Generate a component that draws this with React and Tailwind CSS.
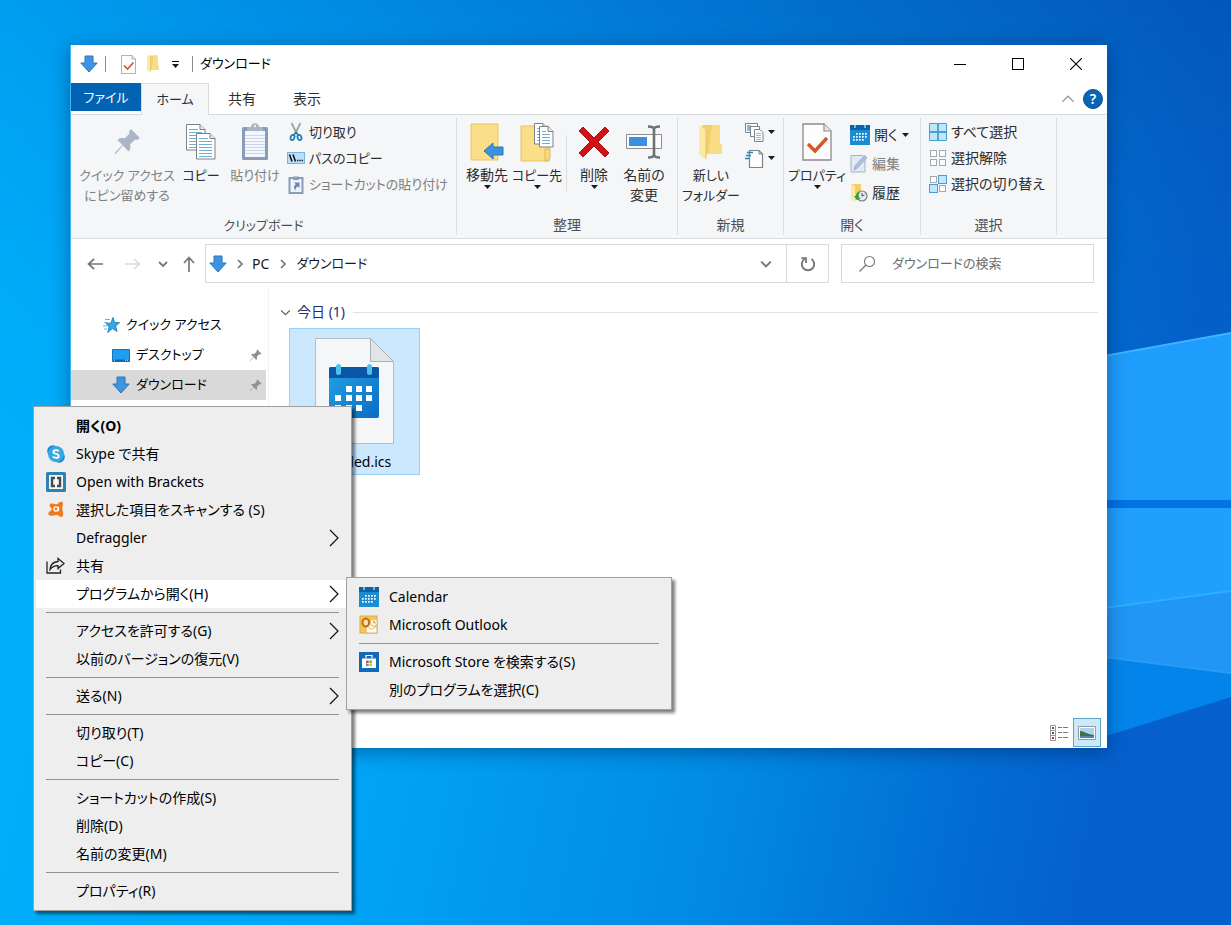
import React from "react";
import clsx from "clsx";

/* ---------- Icons ---------- */

function DownArrow({ className = "w-[18px] h-[18px]" }) {
  return (
    <svg viewBox="0 0 18 18" className={className}>
      <path d="M5 1h8v7h4.2L9 17 .8 8H5z" fill="#3f93e0" stroke="#2878bd" strokeWidth="1" />
    </svg>
  );
}

function CheckDoc({ className }) {
  return (
    <svg viewBox="0 0 30 38" className={className}>
      <path d="M1 1h21l7 7v29H1z" fill="#fdfdfd" stroke="#8a8a8a" strokeWidth="1.3" />
      <path d="M22 1v7h7" fill="#e8e8e8" stroke="#8a8a8a" strokeWidth="1.2" />
      <path d="M6 21l7 7 12-13" fill="none" stroke="#d4572a" strokeWidth="3.4" />
    </svg>
  );
}

function Folder({ className }) {
  return (
    <svg viewBox="0 0 26 36" className={className}>
      <path d="M4 1h18v19l2 1v9H4z" fill="#f3cf6b" />
      <path d="M14 1h8v19l2 1v9H10z" fill="#f9dc86" />
      <path d="M1 1l7 5v29l-7-4z" fill="#fde9a6" />
      <path d="M8 6v29" stroke="#e7c263" strokeWidth="1" />
    </svg>
  );
}

function Caret({ className = "w-[7px] h-1" }) {
  return (
    <svg viewBox="0 0 7 4" className={className}>
      <path d="M0 0h7L3.5 4z" fill="#1b1b1b" />
    </svg>
  );
}

function Chevron({ dir = "right", className = "w-[10px] h-[10px]", width = 1.6 }) {
  const d = {
    right: "M3 1l4 4-4 4",
    down: "M1 3l4 4 4-4",
    up: "M1 7l4-4 4 4",
  }[dir];
  return (
    <svg viewBox="0 0 10 10" className={className}>
      <path d={d} fill="none" stroke="currentColor" strokeWidth={width} />
    </svg>
  );
}

function Pin({ className }) {
  return (
    <svg viewBox="0 0 28 28" className={className}>
      <path
        d="M18 1l9 9-3 2-2-.5-5 5c1 3 .5 5-1.500 7L10 17.500 3.500 25 1 27l2-3.500L9.500 17 4.500 12c2-2 4.500-2.500 7-1.500l5-5-.5-2z"
        fill="currentColor"
      />
    </svg>
  );
}

function PageLines({ x, y, w = 19, h = 26 }) {
  return (
    <g transform={`translate(${x} ${y})`}>
      <path d={`M.5 .5H${w - 5}L${w} 5.500V${h}H.5z`} fill="#fff" stroke="#7d8287" />
      <path d={`M${w - 5} .5V5.500H${w}`} fill="#e9e9e9" stroke="#7d8287" />
      {[5, 8, 11, 14, 17, 20, 23].filter((ly) => ly < h - 2).map((ly) => (
        <path key={ly} d={`M3 ${ly}.5H${ly < 8 ? w - 7 : w - 3}`} stroke="#6fb0cf" />
      ))}
    </g>
  );
}

function CopyIcon() {
  return (
    <svg viewBox="0 0 32 38" className="w-8 h-[38px]">
      <PageLines x={1} y={1} />
      <PageLines x={11} y={10} />
    </svg>
  );
}

function PasteIcon() {
  return (
    <svg viewBox="0 0 28 38" className="w-7 h-[38px]">
      <rect x="1" y="4" width="26" height="33" rx="1.500" fill="#8b9cb8" />
      <path d="M4 8h20v26H4z" fill="#f4f7fd" />
      {[12, 15, 18, 21, 24, 27, 30].map((y) => (
        <path key={y} d={`M4 ${y}.5h20`} stroke="#c9d6ec" />
      ))}
      <path d="M6 4h4c0-5 8-5 8 0h4v4H6z" fill="#a8b5c9" />
      <circle cx="14" cy="3" r="1.200" fill="#eef1f6" />
    </svg>
  );
}

function ScissorsIcon() {
  return (
    <svg viewBox="0 0 16 20" className="w-4 h-5">
      <path d="M3.500 1l5.500 11M12.500 1L7 12" stroke="#9a9fa3" strokeWidth="1.700" />
      <ellipse cx="4.500" cy="15.500" rx="1.900" ry="2.600" fill="none" stroke="#1d7dad" strokeWidth="1.700" transform="rotate(25 4.500 15.500)" />
      <ellipse cx="11.500" cy="15.500" rx="1.900" ry="2.600" fill="none" stroke="#1d7dad" strokeWidth="1.700" transform="rotate(-25 11.500 15.500)" />
      <path d="M5.500 13L8 10.500l2.500 2.500" fill="none" stroke="#1d7dad" strokeWidth="1.700" />
    </svg>
  );
}

function PathIcon() {
  return (
    <svg viewBox="0 0 18 12" className="w-[18px] h-3">
      <rect x=".5" y=".5" width="17" height="11" fill="#b9e0fa" stroke="#7fb3d5" />
      <path d="M2.500 2.500l2.500 7M6 2.500l2.500 7" stroke="#111" strokeWidth="1.500" />
      <path d="M10 8.500h1.300M12.300 8.500h1.300M14.600 8.500h1.300" stroke="#111" strokeWidth="1.500" />
    </svg>
  );
}

function PasteShortcutIcon() {
  return (
    <svg viewBox="0 0 16 19" className="w-4 h-[19px]">
      <rect x="1.500" y="3" width="13" height="15" fill="#eef3fb" stroke="#8b9cb8" strokeWidth="2" />
      <path d="M5 1.500h6V5H5z" fill="#8b9cb8" />
      <path d="M6 7.500h5.500V13L9.700 11.200C8 12.500 7.500 14 7.500 15.500 5 13 6 10.500 7.800 9.300z" fill="#7186ab" />
    </svg>
  );
}

function MoveToIcon() {
  return (
    <svg viewBox="0 0 34 38" className="w-[34px] h-[38px]">
      <path d="M1 1h27v36H1z" fill="#fbdf88" stroke="#e6c368" />
      <path d="M22 37V25h3v12" fill="#f4cf6c" />
      <path d="M14 28l9-8v4h10v8H23v4z" fill="#3c91dd" stroke="#2a78be" />
    </svg>
  );
}

function CopyToIcon() {
  return (
    <svg viewBox="0 0 36 40" className="w-9 h-10">
      <path d="M2 4h28v35H2z" fill="#fbdf88" stroke="#e6c368" />
      <path d="M26 39V27h5v9l-2 3z" fill="#f9d97a" stroke="#dbb85a" />
      <PageLines x={15} y={1} w={14} h={21} />
      <PageLines x={20} y={4} w={14} h={21} />
    </svg>
  );
}

function DeleteIcon() {
  return (
    <svg viewBox="0 0 32 32" className="w-8 h-8">
      <path
        d="M5 1l11 11L27 1l4 4-11 11 11 11-4 4-11-11L5 31l-4-4 11-11L1 5z"
        fill="#d31218"
        stroke="#a80f14"
      />
    </svg>
  );
}

function RenameIcon() {
  return (
    <svg viewBox="0 0 36 34" className="w-9 h-[34px]">
      <path d="M.5 9.500h35v14H.5z" fill="#fdfdfd" stroke="#8a8d91" />
      <path d="M3 12h18v9H3z" fill="#3791e0" />
      <path d="M28 4v26" stroke="#6e7275" strokeWidth="2.600" />
      <path d="M22 1.500c4 0 6 1 6 3 0-2 2-3 6-3M22 32.500c4 0 6-1 6-3 0 2 2 3 6 3" fill="none" stroke="#6e7275" strokeWidth="2.400" />
    </svg>
  );
}

function NewItemIcon() {
  return (
    <svg viewBox="0 0 19 19" className="w-[19px] h-[19px]">
      <path d="M.5 .5h12v9H.5z" fill="#fff" stroke="#7d8287" />
      <path d="M2 2h4v6H2z" fill="#7dbbe0" />
      <path d="M5.500 3.500h9v10h-9z" fill="#fff" stroke="#7d8287" />
      <path d="M9.500 6.500H15l3 3v9H9.500z" fill="#fff" stroke="#7d8287" />
      <path d="M11 10.500h5M11 12.500h5M11 14.500h5M11 16.500h5" stroke="#d9a3a3" />
    </svg>
  );
}

function EasyAccessIcon() {
  return (
    <svg viewBox="0 0 19 19" className="w-[19px] h-[19px]">
      <path d="M4.500 1.500H14l3.500 3.500v13.500H4.500z" fill="#fff" stroke="#7d8287" strokeWidth="1.200" />
      <path d="M14 1.500V5h3.500" fill="none" stroke="#7d8287" />
      <path d="M2 3.500h6M1 6.500h5M0 9.500h4" stroke="#2a86bf" strokeWidth="1.400" />
    </svg>
  );
}

function CalendarIcon({ className = "w-5 h-5" }) {
  return (
    <svg viewBox="0 0 20 20" className={className}>
      <path d="M0 0h20v20H0z" fill="#1c8cd2" />
      <path d="M0 0h20v5H0z" fill="#0d62a8" />
      <path d="M4 0h2v3H4zM14 0h2v3h-2z" fill="#55c3f2" />
      {[
        [7, 8], [10, 8], [13, 8], [16, 8],
        [4, 11], [7, 11], [10, 11], [13, 11], [16, 11],
        [4, 14], [7, 14], [10, 14], [13, 14],
      ].map(([x, y]) => (
        <rect key={`${x}-${y}`} x={x - 1} y={y} width="1.700" height="1.700" fill="#fff" />
      ))}
    </svg>
  );
}

function EditIcon() {
  return (
    <svg viewBox="0 0 18 19" className="w-[18px] h-[19px]">
      <path d="M1 1.500h12l2 2V18H1z" fill="#e3eaf6" stroke="#a3b1ca" />
      <path d="M4 16l1-4L14.500 1.500l2.500 2L7.500 14z" fill="#b3c0d8" stroke="#8fa1c0" strokeWidth=".7" />
    </svg>
  );
}

function HistoryIcon() {
  return (
    <svg viewBox="0 0 18 20" className="w-[18px] h-5">
      <path d="M1 1h10v16H1z" fill="#f5cf66" />
      <path d="M1 1l4 2v16l-4-2z" fill="#fde9a6" />
      <circle cx="12" cy="13" r="5" fill="#e6ebee" stroke="#777d82" strokeWidth="1.200" />
      <path d="M12 10v3l2.500-1" fill="none" stroke="#555" />
      <path d="M4 13l3 4 4-2c-3 0-3-3-1-6-3 0-4 2-4 4z" fill="#2f9e44" />
    </svg>
  );
}

function SelectAllIcon() {
  return (
    <svg viewBox="0 0 18 18" className="w-[18px] h-[18px]">
      <path d="M.5 .5h17v17H.5z" fill="#bfe7fb" stroke="#4c9fc9" />
      <path d="M9 1v16M1 9h16" stroke="#4c9fc9" strokeWidth="1.800" />
    </svg>
  );
}

function SelectIcon({ filled = [] }) {
  const cells = [[1, 1], [10, 1], [1, 10], [10, 10]];
  return (
    <svg viewBox="0 0 18 18" className="w-[18px] h-[18px]">
      {cells.map(([x, y], i) =>
        filled.includes(i) ? (
          <rect key={i} x={x - 0.5} y={y - 0.5} width="8" height="8" fill="#bfe7fb" stroke="#4c9fc9" />
        ) : (
          <rect key={i} x={x + 0.5} y={y + 0.5} width="6" height="6" fill="#fdfdfd" stroke="#a5a9ad" />
        )
      )}
    </svg>
  );
}

function QuickAccessIcon() {
  return (
    <svg viewBox="0 0 18 18" className="w-[18px] h-[18px]">
      <path d="M10 1.500l1.600 5 5 .2-4 3.300 1.500 5.500-4.600-3-4.800 4 1.500-5.500-3-3.500 4.800-.5z" fill="#35a7e8" stroke="#1c7fbd" strokeWidth=".9" />
      <path d="M2 3.500h5M1 6.500h4M0 10h4M1 13h3" stroke="#5bb8ea" />
    </svg>
  );
}

function DesktopIcon() {
  return (
    <svg viewBox="0 0 18 13" className="w-[18px] h-[13px]">
      <path d="M.5 .5h17v12H.5z" fill="#1f9df0" stroke="#1673b8" />
      <path d="M1 10.500h16v1.500H1z" fill="#0f66a8" />
      <path d="M2 11.200h1M13 11.200h1M15 11.200h1" stroke="#fff" />
    </svg>
  );
}

function CalendarFileIcon() {
  return (
    <svg viewBox="0 0 80 106" className="w-20 h-[106px]">
      <defs>
        <linearGradient id="fileCal" x1="0" y1="0" x2="1" y2="1">
          <stop offset="0" stopColor="#22a3e6" />
          <stop offset="1" stopColor="#0b6cc4" />
        </linearGradient>
      </defs>
      <path d="M.5 .5h55l23 23v82H.5z" fill="#f5f6f8" stroke="#b4bcc4" />
      <path d="M55.500 .5v23h23z" fill="#e2e4e6" stroke="#a9b0b6" />
      <rect x="14" y="29" width="50" height="51" rx="2" fill="url(#fileCal)" />
      <path d="M16 29h46a2 2 0 012 2v9H14v-9a2 2 0 012-2z" fill="#0c57a4" />
      <rect x="21" y="26" width="5" height="11" rx="2.500" fill="#4cc2f1" />
      <rect x="52" y="26" width="5" height="11" rx="2.500" fill="#4cc2f1" />
      {[
        [31, 48], [41, 48], [51, 48],
        [20, 57], [31, 57], [41, 57], [51, 57],
        [20, 67], [31, 67], [41, 67],
      ].map(([x, y]) => (
        <rect key={`${x}-${y}`} x={x} y={y} width="6" height="6" fill="#fff" />
      ))}
    </svg>
  );
}

function SkypeIcon() {
  return (
    <svg viewBox="0 0 20 20" className="w-5 h-5">
      <circle cx="7" cy="7" r="5.800" fill="#1c86cc" />
      <circle cx="13" cy="13" r="5.800" fill="#1c86cc" />
      <circle cx="10" cy="10" r="8" fill="#34a9e4" />
      <path d="M12.800 7.300C11.800 5.700 7.400 5.600 7.400 8c0 2.400 5.300 1.400 5.300 3.900 0 2.600-4.700 2.500-5.600.4" fill="none" stroke="#fff" strokeWidth="1.900" />
    </svg>
  );
}

function BracketsIcon() {
  return (
    <svg viewBox="0 0 20 20" className="w-5 h-5">
      <rect width="20" height="20" rx="1.500" fill="#2b82b3" />
      <path d="M3 3h14v14H3z" fill="#f4f6f7" />
      <path d="M9 6H6v8h3M11 6h3v8h-3" fill="none" stroke="#454a4e" strokeWidth="2.400" />
    </svg>
  );
}

function AvastIcon() {
  return (
    <svg viewBox="0 0 20 20" className="w-5 h-5">
      <path
        d="M11.500 4c1.500-2 3.500-2.800 4.800-2 1.200.9.700 2.500.2 4-.5 2-.3 3 .3 5 .7 2.500.6 5.500-1 6-1.500.4-2.500-1.500-4.800-2-2.500-.5-4.500 1.200-6.800.6C2.300 15.100 1.800 13 3 12c1.200-.9 2.500-1.200 2.600-2.700C5.700 7.600 3.500 7 3.500 5.200c.2-1.800 2-2 4-1.500 1.500.4 3 .8 4 .3z"
        fill="#f0791e"
      />
      <circle cx="10" cy="9" r="2.100" fill="none" stroke="#fff" strokeWidth="1.300" />
      <path d="M12.400 6.800v4.400" stroke="#fff" strokeWidth="1.300" />
    </svg>
  );
}

function ShareIcon() {
  return (
    <svg viewBox="0 0 20 20" className="w-5 h-5">
      <path d="M1 5.500V17h13.500v-3.500" fill="none" stroke="#222" strokeWidth="1.300" />
      <path d="M12 2.500L18 7.500l-6 5V9.700C8 9.500 6 11 4 13.500 4.300 9 7.500 6 12 5.500z" fill="none" stroke="#222" strokeWidth="1.300" />
    </svg>
  );
}

function OutlookIcon() {
  return (
    <svg viewBox="0 0 20 20" className="w-5 h-5">
      <rect x="1" y="1" width="17" height="17" fill="#f3c860" stroke="#e3ab3c" />
      <path d="M7 10l5-2 6 2v8H7z" fill="#fffaf0" stroke="#dba63f" strokeWidth=".8" />
      <path d="M7 10.500l5.500 4 5.500-4" fill="none" stroke="#dba63f" strokeWidth=".8" />
      <circle cx="14.800" cy="7.500" r="3.700" fill="#fff7df" stroke="#dba63f" strokeWidth=".8" />
      <path d="M14.800 5.200v2.500h2" fill="none" stroke="#b97a12" strokeWidth=".8" />
      <ellipse cx="6.800" cy="7.500" rx="3.300" ry="4" fill="#fbe3a0" stroke="#bb6f0c" strokeWidth="2" />
    </svg>
  );
}

function StoreIcon() {
  return (
    <svg viewBox="0 0 20 20" className="w-5 h-5">
      <path d="M0 0h20v20H0z" fill="#1269b8" />
      <path d="M3 6.500h14V16H3z" fill="#fff" />
      <path d="M7 6V3.500h6V6" fill="none" stroke="#fff" strokeWidth="1.200" />
      <path d="M7 8.500h2.700v2.500H7z" fill="#e5502c" />
      <path d="M10.300 8.500H13v2.500h-2.700z" fill="#7cb928" />
      <path d="M7 11.600h2.700v2.500H7z" fill="#2a9fe0" />
      <path d="M10.300 11.600H13v2.500h-2.700z" fill="#f6b715" />
    </svg>
  );
}

/* ---------- Wallpaper ---------- */

function Wallpaper() {
  return (
    <svg
      viewBox="0 0 1231 925"
      preserveAspectRatio="none"
      className="absolute inset-0 w-full h-full"
      aria-hidden="true"
    >
      <defs>
        <linearGradient id="sky" x1="0" y1=".3" x2="1" y2="0">
          <stop offset="0" stopColor="#00a4f4" />
          <stop offset=".35" stopColor="#018ae2" />
          <stop offset=".7" stopColor="#036dcb" />
          <stop offset="1" stopColor="#0457ba" />
        </linearGradient>
        <linearGradient id="floor" x1="0" y1="0" x2="1" y2=".15">
          <stop offset="0" stopColor="#00b2fb" />
          <stop offset=".4" stopColor="#01a5f6" />
          <stop offset=".7" stopColor="#018ae4" />
          <stop offset=".88" stopColor="#026fd5" />
          <stop offset="1" stopColor="#0560ce" />
        </linearGradient>
        <linearGradient id="fade" x1="0" y1="0" x2="0" y2="1">
          <stop offset="0" stopColor="#fff" stopOpacity="0" />
          <stop offset=".55" stopColor="#fff" stopOpacity="1" />
        </linearGradient>
        <mask id="lower">
          <path d="M0 0h1231v925H0z" fill="url(#fade)" />
        </mask>
      </defs>
      <path d="M0 0h1231v925H0z" fill="url(#sky)" />
      <path d="M0 0h1231v925H0z" fill="url(#floor)" mask="url(#lower)" />
      <path d="M1000 375l231-42v168h-231z" fill="#1f9dfc" />
      <path d="M1000 375l231-42" stroke="#3db4ff" strokeWidth="2" />
      <path d="M1000 500h231v8h-231z" fill="#0272e4" />
      <path d="M1000 508h231v83l-231 31z" fill="#209ffd" />
      <path d="M1000 622l231-31v82l-231-29z" fill="#2196f4" />
      <path d="M1000 622l231-31" stroke="#2bb0ff" strokeWidth="2" />
      <path d="M1000 644l231 29v24l-131 41h-100z" fill="#0384ea" />
      <path d="M1000 644l231 29" stroke="#279cf5" strokeWidth="2" />
    </svg>
  );
}

/* ---------- Ribbon ---------- */

function RibbonGroup({ label, className, children }) {
  return (
    <section aria-label={label} className={clsx("flex flex-col justify-between border-r border-[#dcdfe2] pt-px shrink-0", className)}>
      <div className="flex items-start">{children}</div>
      <div className="h-5 leading-5 text-center text-[#4c5054]">{label}</div>
    </section>
  );
}

function LargeButton({ icon, lines, className, caret, disabled }) {
  return (
    <button
      type="button"
      disabled={disabled}
      className={clsx("flex flex-col items-center shrink-0 whitespace-nowrap", className, disabled ? "text-[#7c8085]" : "text-[#2b2d30]")}
    >
      <span className="h-[46px] flex items-center">{icon}</span>
      {lines.map((line) => (
        <span key={line} className="h-5 leading-5">{line}</span>
      ))}
      {caret && <Caret />}
    </button>
  );
}

function SmallButton({ icon, label, tall, caret, disabled, name }) {
  return (
    <button
      type="button"
      disabled={disabled}
      aria-label={name}
      className={clsx(
        "flex items-center gap-1 whitespace-nowrap",
        tall ? "h-[29px]" : "h-[26px]",
        disabled ? "text-[#7c8085]" : "text-[#2b2d30]"
      )}
    >
      <span className="flex justify-center min-w-[18px]">{icon}</span>
      {label && <span>{label}</span>}
      {caret && <Caret />}
    </button>
  );
}

function Ribbon() {
  return (
    <div className="flex bg-[#f5f6f7] border-y border-[#dadbdc] h-[125px] py-[3px] text-sm">
      <RibbonGroup label="クリップボード" className="w-[386px] px-[7px] text-[13px]">
        <LargeButton icon={<Pin className="w-7 h-7 text-[#aab6c6]" />} lines={["クイック アクセス", "にピン留めする"]} className="w-[98px]" disabled />
        <LargeButton icon={<CopyIcon />} lines={["コピー"]} className="w-[50px]" />
        <LargeButton icon={<PasteIcon />} lines={["貼り付け"]} className="w-[58px]" disabled />
        <div className="flex flex-col ml-[3px]">
          <SmallButton icon={<ScissorsIcon />} label="切り取り" />
          <SmallButton icon={<PathIcon />} label="パスのコピー" />
          <SmallButton icon={<PasteShortcutIcon />} label="ショートカットの貼り付け" disabled />
        </div>
      </RibbonGroup>
      <RibbonGroup label="整理" className="w-[221px] px-[6px]">
        <LargeButton icon={<MoveToIcon />} lines={["移動先"]} className="w-[48px]" caret />
        <LargeButton icon={<CopyToIcon />} lines={["コピー先"]} className="w-[52px] text-[13px]" caret />
        <div className="w-px h-14 mt-4 mx-[3px] bg-[#dcdfe2]" />
        <LargeButton icon={<DeleteIcon />} lines={["削除"]} className="w-[48px]" caret />
        <LargeButton icon={<RenameIcon />} lines={["名前の", "変更"]} className="w-[52px]" />
      </RibbonGroup>
      <RibbonGroup label="新規" className="w-[106px] px-[2px]">
        <LargeButton icon={<Folder className="w-[26px] h-9" />} lines={["新しい", "フォルダー"]} className="w-[62px] text-[13px]" />
        <div className="flex flex-col ml-[3px]">
          <SmallButton icon={<NewItemIcon />} name="新しいアイテム" caret />
          <SmallButton icon={<EasyAccessIcon />} name="ショートカット" caret />
        </div>
      </RibbonGroup>
      <RibbonGroup label="開く" className="w-[137px] px-[3px]">
        <LargeButton icon={<CheckDoc className="w-[30px] h-[38px]" />} lines={["プロパティ"]} className="w-[60px] text-[13px]" caret />
        <div className="flex flex-col ml-[3px] pt-px">
          <SmallButton icon={<CalendarIcon />} label="開く" tall caret />
          <SmallButton icon={<EditIcon />} label="編集" tall disabled />
          <SmallButton icon={<HistoryIcon />} label="履歴" tall />
        </div>
      </RibbonGroup>
      <RibbonGroup label="選択" className="w-[136px] px-2">
        <div className="flex flex-col">
          <SmallButton icon={<SelectAllIcon />} label="すべて選択" />
          <SmallButton icon={<SelectIcon />} label="選択解除" />
          <SmallButton icon={<SelectIcon filled={[1, 2]} />} label="選択の切り替え" />
        </div>
      </RibbonGroup>
    </div>
  );
}

/* ---------- Explorer window ---------- */

function TitleBar() {
  return (
    <header className="flex items-center h-[38px] pl-[9px] pr-[2px] text-[13px] text-black">
      <DownArrow />
      <span className="w-px h-4 ml-[7px] mr-[15px] bg-[#8d8d8d]" />
      <CheckDoc className="w-[15px] h-[19px]" />
      <Folder className="w-[14px] h-[18px] ml-[10px]" />
      <button type="button" aria-label="クイック アクセス ツール バーのカスタマイズ" className="flex flex-col items-center gap-0.5 mx-3">
        <span className="w-[7px] h-px bg-black" />
        <Caret />
      </button>
      <span className="w-px h-4 ml-px mr-[7px] bg-[#8d8d8d]" />
      <h1>ダウンロード</h1>
      <div className="flex ml-auto">
        <button type="button" aria-label="最小化" className="w-[58px] h-9 flex items-center justify-center">
          <span className="w-3 h-px bg-black" />
        </button>
        <button type="button" aria-label="最大化" className="w-[58px] h-9 flex items-center justify-center">
          <span className="w-3 h-3 border border-black" />
        </button>
        <button type="button" aria-label="閉じる" className="w-[58px] h-9 flex items-center justify-center">
          <svg viewBox="0 0 12 12" className="w-3 h-3">
            <path d="M0 0l12 12M12 0L0 12" stroke="#000" strokeWidth="1.100" />
          </svg>
        </button>
      </div>
    </header>
  );
}

function Tabs() {
  return (
    <nav className="flex h-[31px] text-sm text-[#2b2d30]">
      <button type="button" className="w-[70px] h-7 bg-[#0163b1] text-[13px] text-white">ファイル</button>
      <button type="button" className="relative z-10 w-[68px] h-8 bg-[#f5f6f7] border border-b-0 border-[#dadbdc] text-[13px]">ホーム</button>
      <button type="button" className="w-[66px]">共有</button>
      <button type="button" className="w-[64px]">表示</button>
      <div className="flex items-center gap-2 ml-auto pr-1">
        <button type="button" aria-label="リボンの最小化" className="text-[#9b9b9b]">
          <Chevron dir="up" className="w-[14px] h-[14px]" width={0.9} />
        </button>
        <button type="button" aria-label="ヘルプ" className="w-5 h-5 rounded-full bg-[#0a63b4] border border-[#084f92] text-white font-semibold leading-4">?</button>
      </div>
    </nav>
  );
}

function AddressRow() {
  return (
    <div className="flex items-center h-[49px] pl-4 pr-[13px] text-[13px] text-[#1b1b1b]">
      <button type="button" aria-label="戻る" className="text-[#777]">
        <svg viewBox="0 0 16 14" className="w-4 h-[14px]">
          <path d="M7 2L1.500 7 7 12M1.500 7H16" fill="none" stroke="currentColor" strokeWidth="1.700" />
        </svg>
      </button>
      <button type="button" aria-label="進む" disabled className="text-[#d9d9d9] ml-[22px]">
        <svg viewBox="0 0 16 14" className="w-4 h-[14px]">
          <path d="M9 2l5.500 5L9 12M14.500 7H0" fill="none" stroke="currentColor" strokeWidth="1.500" />
        </svg>
      </button>
      <button type="button" aria-label="最近表示した場所" className="text-[#777] ml-[17px]">
        <Chevron dir="down" width={1.8} />
      </button>
      <button type="button" aria-label="上へ" className="text-[#777] ml-[14px]">
        <svg viewBox="0 0 14 16" className="w-[14px] h-4">
          <path d="M2 7l5-5.500L12 7M7 1.500V16" fill="none" stroke="currentColor" strokeWidth="1.700" />
        </svg>
      </button>
      <div className="flex flex-1 h-[39px] ml-[9px] border border-[#d9d9d9]">
        <div className="flex flex-1 items-center pl-[3px]">
          <DownArrow />
          <span className="text-[#777] ml-[8px] mr-[7px]"><Chevron width={1.7} /></span>
          <a href="#pc" className="text-sm">PC</a>
          <span className="text-[#777] ml-[9px] mr-[8px]"><Chevron width={1.7} /></span>
          <a href="#downloads">ダウンロード</a>
          <button type="button" aria-label="以前の場所" className="ml-auto mr-[14px] text-[#777]">
            <Chevron dir="down" className="w-3 h-3" width={1.7} />
          </button>
        </div>
        <button type="button" aria-label="最新の情報に更新" className="w-[42px] flex items-center justify-center border-l border-[#d9d9d9] text-[#777]">
          <svg viewBox="0 0 16 16" className="w-4 h-4">
            <path d="M4.500 3A6.200 6.200 0 1011.500 3" fill="none" stroke="currentColor" strokeWidth="2" />
            <path d="M1.500 2.200H6V7" fill="none" stroke="currentColor" strokeWidth="1.800" />
          </svg>
        </button>
      </div>
      <label className="flex items-center w-[253px] h-[39px] ml-3 pl-4 border border-[#d9d9d9]">
        <svg viewBox="0 0 18 18" className="w-[18px] h-[18px] shrink-0">
          <circle cx="11.500" cy="6.500" r="5" fill="none" stroke="#777" strokeWidth="1.100" />
          <path d="M8 10l-6.500 6.500" stroke="#777" strokeWidth="1.300" />
        </svg>
        <input
          type="search"
          aria-label="ダウンロードの検索"
          placeholder="ダウンロードの検索"
          className="flex-1 min-w-0 ml-4 outline-none placeholder:text-[#6d6d6d]"
        />
      </label>
    </div>
  );
}

function Sidebar() {
  return (
    <aside className="w-[198px] shrink-0 pt-[22px] border-r border-[#f2f2f2] text-[13px] text-black">
      <a href="#quick" className="flex items-center h-[30px] pl-8 gap-[5px]">
        <QuickAccessIcon />クイック アクセス
      </a>
      <a href="#desktop" className="flex items-center h-[30px] pl-[41px] gap-[6px] mr-0.5 pr-1">
        <DesktopIcon />デスクトップ
        <Pin className="w-[13px] h-[13px] ml-auto text-[#8a939c]" />
      </a>
      <a href="#downloads" className="flex items-center h-[30px] pl-[41px] gap-[6px] mr-0.5 pr-1 bg-[#d9d9d9]">
        <DownArrow />ダウンロード
        <Pin className="w-[13px] h-[13px] ml-auto text-[#8a939c]" />
      </a>
    </aside>
  );
}

function FileList() {
  return (
    <main className="flex-1 flex flex-col pl-[11px] pt-3 text-sm">
      <div className="flex items-center h-6 pr-[9px]">
        <Chevron dir="down" className="w-[11px] h-[11px] text-[#555]" width={1} />
        <h2 className="ml-[6px] mr-2 text-[#1e2f6f]">今日 (1)</h2>
        <span className="flex-1 h-px bg-[#e2e2e2]" />
      </div>
      <button type="button" className="flex flex-col items-center w-[131px] h-[147px] ml-[9px] mt-1 pt-[9px] border border-[#99d1f5] bg-[#cce8ff] text-black">
        <CalendarFileIcon />
        <span className="mt-2 leading-5">Untitled.ics</span>
      </button>
      <div className="flex items-center gap-[5px] mt-auto pr-[6px] pb-px justify-end">
        <button type="button" aria-label="詳細">
          <svg viewBox="0 0 18 16" className="w-[18px] h-4">
            {[0, 5, 10].map((y) => (
              <g key={y}>
                <path d={`M.5 ${y}.5h5v5h-5z`} fill="#fff" stroke="#999" />
                <path d={`M2 ${y + 2}h2v2H2z`} fill={y === 10 ? "#b33a2e" : "#555"} />
                <path d={`M8 ${y + 2}.5h4M13 ${y + 2}.5h5`} stroke="#777" />
              </g>
            ))}
          </svg>
        </button>
        <button type="button" aria-label="大アイコン" className="w-7 h-[29px] flex items-center justify-center bg-[#cbe9f8] border border-[#58a5c4]">
          <svg viewBox="0 0 18 14" className="w-[18px] h-[14px]">
            <path d="M.5 .5h17v13H.5z" fill="#fff" stroke="#999" />
            <path d="M2 2h14v10H2z" fill="#a9d3f1" />
            <path d="M2 5c4 0 6 3 14 4v1H2z" fill="#3d7048" />
            <path d="M2 10h14v2H2z" fill="#4a86b8" />
          </svg>
        </button>
      </div>
    </main>
  );
}

function ExplorerWindow() {
  return (
    <div className="absolute top-[45px] left-[70px] right-[124px] bottom-[177px] flex flex-col bg-white border-l border-[#3fb4ee] shadow-[0_4px_18px_rgba(0,20,60,0.4)]">
      <TitleBar />
      <Tabs />
      <Ribbon />
      <AddressRow />
      <div className="flex flex-1">
        <Sidebar />
        <FileList />
      </div>
    </div>
  );
}

/* ---------- Context menus ---------- */

const contextItems = [
  { label: "開く(O)", bold: true },
  { label: "Skype で共有", icon: <SkypeIcon /> },
  { label: "Open with Brackets", icon: <BracketsIcon /> },
  { label: "選択した項目をスキャンする (S)", icon: <AvastIcon /> },
  { label: "Defraggler", arrow: true },
  { label: "共有", icon: <ShareIcon /> },
  { label: "プログラムから開く(H)", arrow: true, active: true },
  null,
  { label: "アクセスを許可する(G)", arrow: true },
  { label: "以前のバージョンの復元(V)" },
  null,
  { label: "送る(N)", arrow: true },
  null,
  { label: "切り取り(T)" },
  { label: "コピー(C)" },
  null,
  { label: "ショートカットの作成(S)" },
  { label: "削除(D)" },
  { label: "名前の変更(M)" },
  null,
  { label: "プロパティ(R)" },
];

const openWithItems = [
  { label: "Calendar", icon: <CalendarIcon /> },
  { label: "Microsoft Outlook", icon: <OutlookIcon /> },
  null,
  { label: "Microsoft Store を検索する(S)", icon: <StoreIcon /> },
  { label: "別のプログラムを選択(C)" },
];

function Menu({ items, label, className }) {
  return (
    <div
      role="menu"
      aria-label={label}
      className={clsx(
        "absolute py-[5px] pl-[2px] pr-[5px] bg-[#eee] border border-[#a0a0a0] shadow-[3px_3px_3px_rgba(0,0,0,0.5)] text-sm text-black",
        className
      )}
    >
      {items.map((item, i) =>
        item === null ? (
          <div key={i} role="separator" className="h-px my-1 ml-[10px] mr-[7px] bg-[#919191]" />
        ) : (
          <button
            key={item.label}
            type="button"
            role="menuitem"
            className={clsx(
              "flex items-center w-full h-7 pl-[10px] pr-[7px] text-left whitespace-nowrap",
              item.active && "bg-white",
              item.bold && "font-bold"
            )}
          >
            <span className="w-[30px] shrink-0">{item.icon}</span>
            <span className="flex-1">{item.label}</span>
            {item.arrow && (
              <svg viewBox="0 0 10 18" className="w-[10px] h-[18px]">
                <path d="M1 1l8 8-8 8" fill="none" stroke="#111" strokeWidth="1.200" />
              </svg>
            )}
          </button>
        )
      )}
    </div>
  );
}

export default function App() {
  return (
    <div className="relative min-h-screen overflow-hidden font-['Noto_Sans','Noto_Sans_CJK_JP',sans-serif] [font-feature-settings:'palt']" lang="ja">
      <Wallpaper />
      <ExplorerWindow />
      <Menu items={contextItems} label="ファイル操作" className="left-[33px] top-[406px] w-[319px]" />
      <Menu items={openWithItems} label="プログラムから開く" className="left-[346px] top-[577px] w-[326px]" />
    </div>
  );
}
